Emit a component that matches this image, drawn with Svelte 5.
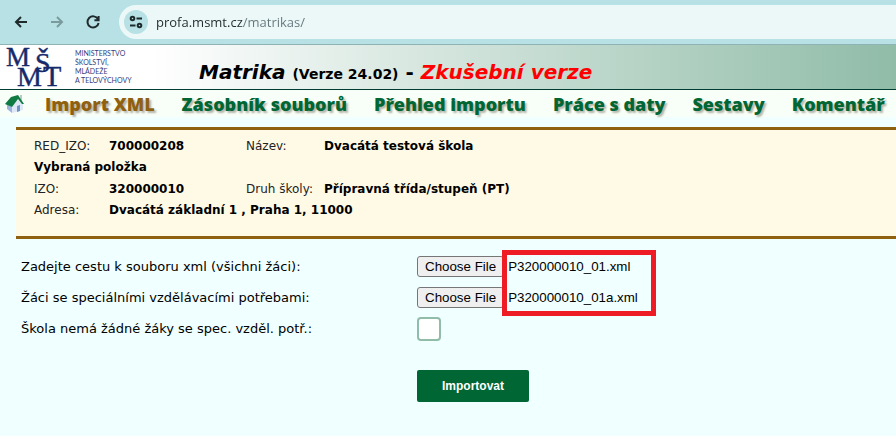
<script lang="ts">
  const menu = ["Import XML", "Zásobník souborů", "Přehled importu", "Práce s daty", "Sestavy", "Komentář"];
  const current = "Import XML";

  let address = $state("profa.msmt.cz/matrikas/");
  let noSpecialPupils = $state(false);
  let allPupils = $state(fileList("P320000010_01.xml"));
  let specialPupils = $state(fileList("P320000010_01a.xml"));

  function fileList(name: string) {
    const transfer = new DataTransfer();
    transfer.items.add(new File([""], name, { type: "text/xml" }));
    return transfer.files;
  }
</script>

<div class="toolbar">
  <button class="tool" aria-label="Back">
    <svg viewBox="0 0 16 16"><path d="M14 8H3M8 3L3 8l5 5" /></svg>
  </button>
  <button class="tool" aria-label="Forward" disabled>
    <svg viewBox="0 0 16 16"><path d="M2 8h11M8 3l5 5-5 5" /></svg>
  </button>
  <button class="tool" aria-label="Reload">
    <svg viewBox="0 0 16 16"><path d="M13 5.2A5.6 5.6 0 1 0 13.6 9M13.6 2v4.2H9.4" /></svg>
  </button>
  <div class="omnibox">
    <button class="site" aria-label="Site information">
      <svg viewBox="0 0 16 16">
        <circle cx="4.5" cy="4.5" r="1.8" />
        <path d="M8.5 4.5H14M2 11.5h5.5" />
        <circle cx="11.5" cy="11.5" r="1.8" />
      </svg>
    </button>
    <input class="address" aria-label="Address" spellcheck="false" bind:value={address} />
  </div>
</div>

<header>
  <div class="brand">
    <svg class="logo" viewBox="0 0 62 44" role="img" aria-label="MŠMT">
      <text x="1" y="21" font-size="27">M</text>
      <text x="30" y="27" font-size="28">Š</text>
      <text x="12" y="41" font-size="28">M</text>
      <text x="38" y="41" font-size="30">T</text>
    </svg>
    <div class="ministry">MINISTERSTVO<br />ŠKOLSTVÍ,<br />MLÁDEŽE<br />A TELOVÝCHOVY</div>
  </div>
  <h1><i>Matrika</i> <small>(Verze 24.02)</small> - <em>Zkušební verze</em></h1>
</header>

<nav>
  <a class="home" href="#home" aria-label="Domů">
    <svg viewBox="0 0 20 20">
      <path d="M2 10l5 3v6l-5-4z" fill="#9fb4dc" />
      <path d="M7 12l5-7 6 5v6l-11 3z" fill="#dfe8f6" />
      <path d="M12 12l3-1v6l-3 1z" fill="#6f93c4" />
      <path d="M15 1h2v6l-2-2z" fill="#b9ccc4" />
      <path d="M0 10l6-7 7-2 6 9h-2l-4-5-6 8z" fill="#0f7a42" />
    </svg>
  </a>
  {#each menu as item}
    <a href="#menu" class:current={item === current}>{item}</a>
  {/each}
</nav>

<main>
  <section class="school">
    <dl>
      <dt>RED_IZO:</dt>
      <dd>700000208</dd>
      <dt>Název:</dt>
      <dd>Dvacátá testová škola</dd>
    </dl>
    <h2>Vybraná položka</h2>
    <dl>
      <dt>IZO:</dt>
      <dd>320000010</dd>
      <dt>Druh školy:</dt>
      <dd>Přípravná třída/stupeň (PT)</dd>
      <dt>Adresa:</dt>
      <dd class="wide">Dvacátá základní 1 , Praha 1, 11000</dd>
    </dl>
  </section>

  <form onsubmit={(e) => e.preventDefault()}>
    <div class="files">
      <label for="all">Zadejte cestu k souboru xml (všichni žáci):</label>
      <input id="all" type="file" accept=".xml" bind:files={allPupils} />
      <label for="special">Žáci se speciálními vzdělávacími potřebami:</label>
      <input id="special" type="file" accept=".xml" bind:files={specialPupils} />
      <div class="highlight"></div>
    </div>
    <div class="row">
      <label for="none">Škola nemá žádné žáky se spec. vzděl. potř.:</label>
      <input id="none" type="checkbox" bind:checked={noSpecialPupils} />
    </div>
    <div class="row submit">
      <button type="submit">Importovat</button>
    </div>
  </form>
</main>

<style>
  :global(body) {
    margin: 0;
    background: #f0ffff;
    color: #000;
    font-family: Verdana, "DejaVu Sans", sans-serif;
    font-size: 13px;
  }

  .toolbar {
    display: flex;
    align-items: center;
    gap: 20px;
    height: 44px;
    padding-left: 13px;
    background: #b7e1e4;
    border-bottom: 1px solid #8fb3b3;
  }
  .tool,
  .site {
    display: flex;
    padding: 0;
    border: none;
    background: none;
  }
  .toolbar svg {
    width: 16px;
    height: 16px;
    fill: none;
    stroke: #1f2a2c;
    stroke-width: 2;
  }
  .toolbar .tool:disabled svg {
    stroke: #7c9b9e;
  }
  .omnibox {
    flex: 1;
    display: flex;
    align-items: center;
    gap: 8px;
    height: 34px;
    margin-left: -2px;
    padding-left: 5px;
    border-radius: 17px 0 0 17px;
    background: #ecf8f8;
  }
  .site {
    align-items: center;
    justify-content: center;
    width: 24px;
    height: 24px;
    border-radius: 50%;
    background: #b7e1e4;
  }
  .address {
    flex: 1;
    padding: 0;
    border: none;
    outline: none;
    font: 13px "Segoe UI", "Open Sans", sans-serif;
    color: transparent;
    caret-color: #1f2a2c;
    /* host name dark, path grey */
    background: linear-gradient(to right, #1f2a2c 87px, #62757a 87px);
    background-clip: text;
  }

  header {
    display: flex;
    height: 44px;
    background: linear-gradient(to right, #fff 150px, #90bca8);
    border-bottom: 1px solid #003c32;
  }
  .brand {
    display: flex;
    align-items: flex-start;
    gap: 8px;
    width: 188px;
    padding-left: 5px;
  }
  .logo {
    width: 62px;
    height: 44px;
    overflow: visible;
    font-family: "Liberation Serif", serif;
    fill: #16296b;
    stroke: #16296b;
    stroke-width: 0.4;
  }
  .ministry {
    padding-top: 4px;
    color: #34407c;
    font: 7px/9px Lato, sans-serif;
  }
  h1 {
    align-self: flex-end;
    margin: 0 0 3px;
    padding-left: 6px;
    font-size: 20px;
    line-height: 24px;
    white-space: nowrap;
  }
  small {
    font-size: 14px;
  }
  em {
    color: #f00;
  }

  nav {
    display: flex;
    align-items: center;
    gap: 27px;
    height: 27px;
    padding-left: 5px;
    background: #f8fff8;
    white-space: nowrap;
  }
  nav a {
    color: #006633;
    font: 800 18px/24px "Open Sans", sans-serif;
    text-decoration: none;
    text-shadow: 2px 2px 2px #b4b4a8;
  }
  nav a.current {
    color: #8f6010;
  }
  .home {
    display: flex;
    margin-right: -7px;
  }
  .home svg {
    width: 20px;
    height: 20px;
  }

  main {
    padding: 10px 0 0 16px;
  }
  .school {
    padding: 6px 18px 15px;
    border-top: 3px solid #8f6010;
    border-bottom: 3px solid #8f6010;
    background: #fffae6;
    font-size: 12px;
  }
  dl {
    display: grid;
    grid-template-columns: 75px 137px 78px 1fr;
    margin: 0;
    line-height: 21px;
  }
  dt {
    color: #222;
  }
  dd {
    margin: 0;
    font-weight: bold;
  }
  .wide {
    grid-column: 2 / -1;
  }
  h2 {
    margin: 0 0 2px;
    font-size: 12px;
    line-height: 20px;
  }

  form {
    padding: 12px 5px;
  }
  .files {
    position: relative;
  }
  .files,
  .row {
    display: grid;
    grid-template-columns: 396px 1fr;
    grid-auto-rows: 31px;
    align-items: center;
  }
  input[type="file"]::file-selector-button {
    height: 21px;
    padding: 0 7px;
    border: 1px solid #767676;
    border-radius: 3px;
    background: #efefef;
  }
  .highlight {
    position: absolute;
    top: -1px;
    left: 481px;
    box-sizing: border-box;
    width: 154px;
    height: 66px;
    border: 5px solid #ee1c25;
    pointer-events: none;
  }
  input[type="checkbox"] {
    appearance: none;
    width: 24px;
    height: 24px;
    margin: 0;
    border: 2px solid #90bca8;
    border-radius: 4px;
    background: #fff;
  }
  input[type="checkbox"]:checked {
    background: #006633;
  }
  .submit button {
    grid-column: 2;
    justify-self: start;
    height: 32px;
    padding: 0 25px;
    border: none;
    border-radius: 2px;
    background: #006633;
    color: #fff;
    font: bold 12px Arial, "Liberation Sans", sans-serif;
  }
  .submit {
    margin-top: 26px;
  }
</style>
